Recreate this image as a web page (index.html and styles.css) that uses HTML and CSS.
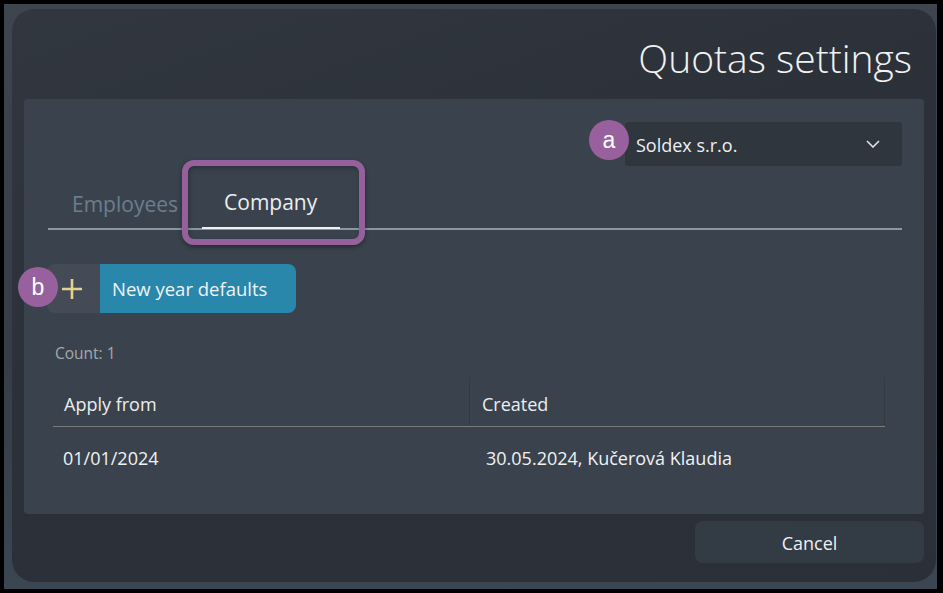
FILE: index.html
```html
<!DOCTYPE html>
<html>
<head>
<meta charset="utf-8">
<link rel="stylesheet" href="styles.css">
</head>
<body>
<div class="frame">
  <div class="dialog">
    <div class="title-row"><h1 class="title">Quotas settings</h1></div>
    <div class="panel">
      <div class="company-row">
        <div class="select">
          <span class="badge badge-a">a</span>
          <span class="select-text">Soldex s.r.o.</span>
          <svg class="chevron" width="14" height="8" viewBox="0 0 14 8"><path d="M1 1 L7 7 L13 1" fill="none" stroke="#dfe3e6" stroke-width="1.6"/></svg>
        </div>
      </div>
      <div class="tabs">
        <div class="tab">Employees</div>
        <div class="tab active">Company<span class="highlight"></span></div>
      </div>
      <div class="action-row">
        <button class="add-btn">
          <span class="badge badge-b">b</span>
          <span class="add-icon"><svg width="22" height="22" viewBox="0 0 22 22"><path d="M11 1 V21 M1 11 H21" stroke="#e3d38c" stroke-width="2.6"/></svg></span>
          <span class="add-label">New year defaults</span>
        </button>
      </div>
      <div class="count">Count: 1</div>
      <div class="table">
        <div class="thead">
          <div class="th col1">Apply from</div>
          <div class="th col2">Created</div>
        </div>
        <div class="trow">
          <div class="td col1">01/01/2024</div>
          <div class="td col2">30.05.2024, Kučerová Klaudia</div>
        </div>
      </div>
    </div>
    <div class="footer">
      <button class="cancel">Cancel</button>
    </div>
  </div>
</div>
</body>
</html>
```
FILE: styles.css
```css
* { box-sizing: border-box; }
html, body { margin: 0; padding: 0; }
body {
  background: #000;
  width: 943px;
  height: 593px;
  overflow: hidden;
  font-family: "Open Sans", "Noto Sans", sans-serif;
}
.frame {
  margin: 4px 6px 4px 4px;
  height: 585px;
  background: linear-gradient(180deg, #3e454e 0%, #363d46 60%, #3a4652 100%);
  padding: 5px 1px 7px 8px;
}
.dialog {
  width: 924px;
  height: 573px;
  border-radius: 22px;
  background: linear-gradient(160deg, #31373f 0%, #2c3139 45%, #2b3038 100%);
  display: flex;
  flex-direction: column;
  padding: 0 12px 0 12px;
}
.title-row {
  height: 90px;
  display: flex;
  justify-content: flex-end;
  padding-right: 12px;
}
.title {
  margin: 22px 0 0 0;
  font-weight: 300;
  font-size: 39px;
  line-height: 54px;
  color: #f2f2f2;
}
.panel {
  height: 415px;
  background: #3a434d;
  border-radius: 4px;
  padding: 23px 22px 0 24px;
  display: flex;
  flex-direction: column;
}
.company-row {
  display: flex;
  justify-content: flex-end;
}
.select {
  position: relative;
  width: 277px;
  height: 44px;
  background: #2f363e;
  border-radius: 3px;
  display: flex;
  align-items: center;
  padding: 0 22px 0 11px;
}
.select-text {
  flex: 1;
  font-size: 18px;
  color: #eef0f2;
  padding-top: 1px;
}
.chevron { display: block; }
.badge {
  position: absolute;
  width: 40px;
  height: 40px;
  border-radius: 50%;
  background: #98619e;
  color: #fff;
  font-family: "Liberation Sans", Arial, sans-serif;
  font-size: 23px;
  display: flex;
  align-items: center;
  justify-content: center;
  z-index: 2;
}
.badge-a { left: -36px; top: -2px; }
.badge-b { left: -29px; top: 3px; }
.tabs {
  display: flex;
  border-bottom: 2px solid #8897a4;
  height: 64px;
  align-items: flex-end;
}
.tab {
  position: relative;
  padding: 0 24px 11px 24px;
  font-size: 21px;
  line-height: 28px;
  color: #6b7e8e;
  margin-bottom: -1px;
}
.tab.active {
  color: #eceeef;
  padding: 0 23px 11px 22px;
  border-bottom: 2px solid #f0f0f0;
}
.highlight {
  position: absolute;
  left: -20px;
  right: -25px;
  top: -28px;
  bottom: -18px;
  border: 6px solid #95609b;
  border-radius: 12px;
  box-shadow: 0 2px 5px rgba(0,0,0,0.4), inset 1px 2px 4px rgba(0,0,0,0.3);
}
.action-row {
  margin-top: 34px;
  display: flex;
}
.add-btn {
  position: relative;
  display: flex;
  height: 49px;
  padding: 0;
  margin-left: -1px;
  border: none;
  border-radius: 8px;
  font-family: inherit;
  background: none;
}
.add-icon {
  width: 53px;
  height: 49px;
  background: #454b56;
  border-radius: 8px 0 0 8px;
  display: flex;
  align-items: center;
  justify-content: center;
}
.add-icon svg { display: block; margin-left: -4px; }
.add-label {
  width: 196px;
  height: 49px;
  background: #2a87ac;
  border-radius: 0 8px 8px 0;
  color: #eef3f6;
  font-size: 18.5px;
  display: flex;
  align-items: center;
  padding-left: 12px;
}
.count {
  margin-top: 30px;
  padding-left: 7px;
  font-size: 15.5px;
  color: #a5a9ad;
  line-height: 20px;
}
.table {
  margin-top: 14px;
  margin-left: 5px;
  width: 832px;
}
.thead {
  display: flex;
  height: 50px;
  border-bottom: 1px solid #7d7b79;
}
.th {
  font-size: 18px;
  color: #eceeef;
  display: flex;
  align-items: center;
  padding-top: 4px;
}
.thead .col1 { width: 416px; padding-left: 11px; }
.thead .col2 { flex: 1; padding-left: 12px; border-left: 1px solid #333a42; border-right: 1px solid #333a42; }
.trow {
  display: flex;
  height: 62px;
  align-items: center;
}
.td {
  font-size: 18px;
  color: #f0f2f3;
}
.trow .col1 { width: 416px; padding-left: 10px; }
.trow .col2 { flex: 1; padding-left: 17px; }
.footer {
  display: flex;
  justify-content: flex-end;
  padding-top: 7px;
}
.cancel {
  width: 229px;
  height: 42px;
  background: #333b44;
  border: none;
  border-radius: 8px;
  color: #eef0f2;
  font-family: inherit;
  font-size: 18px;
  padding-top: 3px;
}
```
